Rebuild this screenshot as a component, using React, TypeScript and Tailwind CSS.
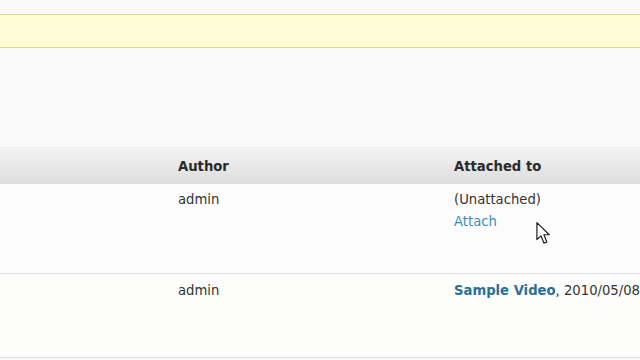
import React from 'react'

const font = { fontFamily: '"DejaVu Sans", Verdana, sans-serif' }

const Cursor = () => (
    <svg width="18" height="24" viewBox="0 0 16 22" className="absolute left-[535px] top-[221px]">
        <path d="M1.5 1.5 L1.5 17 L5.2 13.6 L8 20.3 L10.6 19.2 L7.9 12.6 L12.8 12.6 Z" fill="#fff" stroke="#222" strokeWidth="1.1" strokeLinejoin="round" />
    </svg>
)

export default function App() {
    return (
        <div className="relative w-[640px] h-[360px] overflow-hidden bg-[#f9f9f9] text-[13.2px] text-[#333]" style={font}>
            <div className="pt-[14px]">
                <div className="h-[34px] border-y border-[#dcd68c] bg-[#fffcd6]" />
            </div>

            <div className="h-[99px]" />

            <div className="border-t border-[#ececec]">
                <div className="grid grid-cols-[178px_276px_1fr] h-[36px] items-center pt-[2px] bg-gradient-to-b from-[#f3f3f3] to-[#dedede] border-b border-[#dcdcdc] font-bold text-[#2a2a2a]">
                    <div />
                    <div>Author</div>
                    <div>Attached to</div>
                </div>

                <div className="grid grid-cols-[178px_276px_1fr] h-[90px] bg-[#fcfcfc] border-b border-[#e2e2e2] pt-[8px] leading-[15px]">
                    <div />
                    <div>admin</div>
                    <div>
                        <div>(Unattached)</div>
                        <a className="block mt-[7px] text-[#3c8dba]">Attach</a>
                    </div>
                </div>

                <div className="grid grid-cols-[178px_276px_1fr] h-[84px] bg-[#fdfdfb] border-b border-[#e2e2e2] pt-[9px] leading-[15px]">
                    <div />
                    <div>admin</div>
                    <div className="whitespace-nowrap">
                        <a className="font-bold text-[#2a6f98]">Sample Video</a>, 2010/05/08
                    </div>
                </div>
            </div>

            <Cursor />
        </div>
    )
}
